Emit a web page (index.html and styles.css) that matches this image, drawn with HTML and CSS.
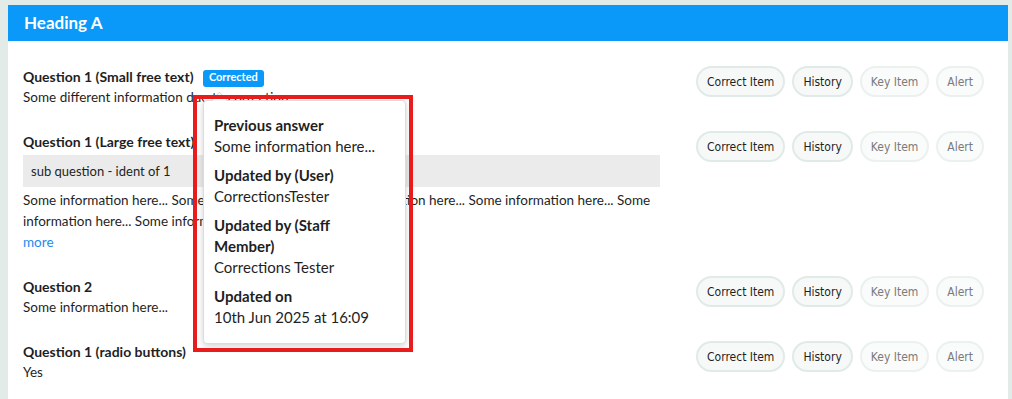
FILE: index.html
```html
<!DOCTYPE HTML>
<html>
<head>
    <title>Corrections</title>
    <link rel="stylesheet" href="styles.css">
</head>
<body>

<div class="card">
    <div class="card-header">Heading A</div>

    <div class="card-body">
        <div class="item">
            <div class="item-main">
                <div class="item-title">Question 1 (Small free text) <span class="badge">Corrected</span></div>
                <div class="item-answer">Some different information due to correction</div>
            </div>
            <div class="actions">
                <button class="btn">Correct Item</button>
                <button class="btn">History</button>
                <button class="btn disabled">Key Item</button>
                <button class="btn disabled">Alert</button>
            </div>
        </div>

        <div class="item">
            <div class="item-main">
                <div class="item-title">Question 1 (Large free text)</div>
                <div class="sub-question">sub question - ident of 1</div>
                <div class="item-answer">Some information here... Some information here... Some information here... Some information here... Some information here... Some information here...</div>
                <a class="more" href="#">more</a>
            </div>
            <div class="actions">
                <button class="btn">Correct Item</button>
                <button class="btn">History</button>
                <button class="btn disabled">Key Item</button>
                <button class="btn disabled">Alert</button>
            </div>
        </div>

        <div class="item">
            <div class="item-main">
                <div class="item-title">Question 2</div>
                <div class="item-answer">Some information here...</div>
            </div>
            <div class="actions">
                <button class="btn">Correct Item</button>
                <button class="btn">History</button>
                <button class="btn disabled">Key Item</button>
                <button class="btn disabled">Alert</button>
            </div>
        </div>

        <div class="item">
            <div class="item-main">
                <div class="item-title">Question 1 (radio buttons)</div>
                <div class="item-answer">Yes</div>
            </div>
            <div class="actions">
                <button class="btn">Correct Item</button>
                <button class="btn">History</button>
                <button class="btn disabled">Key Item</button>
                <button class="btn disabled">Alert</button>
            </div>
        </div>

        <!-- popover showing the previous answer -->
        <div class="popover">
            <div class="popover-group">
                <div class="popover-label">Previous answer</div>
                <div>Some information here...</div>
            </div>
            <div class="popover-group">
                <div class="popover-label">Updated by (User)</div>
                <div>CorrectionsTester</div>
            </div>
            <div class="popover-group">
                <div class="popover-label">Updated by (Staff Member)</div>
                <div>Corrections Tester</div>
            </div>
            <div class="popover-group">
                <div class="popover-label">Updated on</div>
                <div>10th Jun 2025 at 16:09</div>
            </div>
        </div>
        <div class="highlight"></div>
    </div>
</div>

</body>
</html>
```

FILE: styles.css
```css
body, html {
    margin: 0;
    padding: 0;
    background: #e3ebe8;
    font: 13.5px "Lato", sans-serif;
    color: #1f1f1f;
}

.card {
    margin: 5px 4px 0 8px;
    background: #ffffff;
    min-height: 394px;
}

.card-header {
    background: #0a98f9;
    color: #ffffff;
    font-weight: bold;
    font-size: 17px;
    height: 36px;
    line-height: 36px;
    padding: 0 16px;
}

.card-body {
    position: relative;
    padding: 25px 24px 0 15px;
}

.item {
    display: flex;
    align-items: flex-start;
    margin-bottom: 23px;
}

.item-main {
    width: 637px;
    line-height: 21px;
}

.item-title {
    font-weight: bold;
    font-size: 14px;
}

.badge {
    display: inline-block;
    margin-left: 6px;
    padding: 0 6px;
    height: 17px;
    line-height: 17px;
    border-radius: 3px;
    background: #0a98f9;
    color: #ffffff;
    font: bold 11px "Lato", sans-serif;
    vertical-align: 1px;
}

.sub-question {
    margin: 3px 0;
    padding: 0 8px;
    height: 32px;
    line-height: 32px;
    background: #ebebeb;
    font-size: 13px;
}

.more {
    color: #1a8cf0;
    text-decoration: none;
}

.actions {
    margin-left: auto;
    display: flex;
    gap: 6px;
}

.btn {
    height: 31px;
    padding: 0 9px;
    border: 2px solid #e0ebe7;
    border-radius: 16px;
    background: #f7f9f8;
    color: #1f1f1f;
    font: 12px "DejaVu Sans Condensed", sans-serif;
}

.btn + .btn {
    margin-left: 1px;
}

.btn.disabled {
    color: #7a7a7a;
    border-color: #ebf1ef;
    background: #fafbfb;
}

.popover {
    position: absolute;
    left: 195px;
    top: 59px;
    width: 171px;
    padding: 14px 20px 15px 10px;
    background: #ffffff;
    border: 1px solid #dcdcdc;
    border-radius: 4px;
    box-shadow: 0 2px 6px rgba(0, 0, 0, 0.18);
    line-height: 21px;
    font-size: 15px;
}

.popover::before {
    content: "";
    position: absolute;
    left: 10px;
    top: -7px;
    width: 10px;
    height: 10px;
    background: #ffffff;
    border-left: 1px solid #dcdcdc;
    border-top: 1px solid #dcdcdc;
    transform: rotate(45deg);
}

.popover-group + .popover-group {
    margin-top: 8px;
}

.popover-label {
    font-weight: bold;
}

.highlight {
    position: absolute;
    left: 185px;
    top: 54px;
    width: 212px;
    height: 249px;
    border: 4px solid #e81c1c;
}
```
